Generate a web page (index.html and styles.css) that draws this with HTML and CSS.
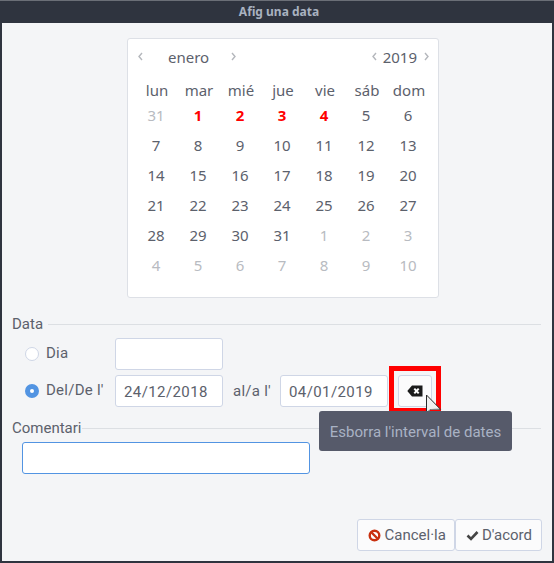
FILE: index.html
```html
<!DOCTYPE html>
<html lang="ca">
<head>
<meta charset="utf-8">
<title>Afig una data</title>
<link rel="stylesheet" href="styles.css">
</head>
<body>
<div class="window">
  <div class="titlebar">Afig una data</div>
  <div class="content">
    <div class="calendar">
      <div class="cal-head">
        <span class="chev m-prev"><svg width="7" height="9" viewBox="0 0 7 9"><path d="M5 1 2 4.500 5 8" fill="none" stroke="#b4b7bc" stroke-width="1.400"/></svg></span>
        <span class="month">enero</span>
        <span class="chev m-next"><svg width="7" height="9" viewBox="0 0 7 9"><path d="M2 1 5 4.500 2 8" fill="none" stroke="#b4b7bc" stroke-width="1.400"/></svg></span>
        <span class="head-spacer"></span>
        <span class="chev"><svg width="7" height="9" viewBox="0 0 7 9"><path d="M5 1 2 4.500 5 8" fill="none" stroke="#b4b7bc" stroke-width="1.400"/></svg></span>
        <span class="year">2019</span>
        <span class="chev"><svg width="7" height="9" viewBox="0 0 7 9"><path d="M2 1 5 4.500 2 8" fill="none" stroke="#b4b7bc" stroke-width="1.400"/></svg></span>
      </div>
      <div class="cal-grid names">
        <span>lun</span><span>mar</span><span>mié</span><span>jue</span><span>vie</span><span>sáb</span><span>dom</span>
      </div>
      <div class="cal-grid days">
        <span class="off">31</span><span class="hl">1</span><span class="hl">2</span><span class="hl">3</span><span class="hl">4</span><span>5</span><span>6</span>
        <span>7</span><span>8</span><span>9</span><span>10</span><span>11</span><span>12</span><span>13</span>
        <span>14</span><span>15</span><span>16</span><span>17</span><span>18</span><span>19</span><span>20</span>
        <span>21</span><span>22</span><span>23</span><span>24</span><span>25</span><span>26</span><span>27</span>
        <span>28</span><span>29</span><span>30</span><span>31</span><span class="off">1</span><span class="off">2</span><span class="off">3</span>
        <span class="off">4</span><span class="off">5</span><span class="off">6</span><span class="off">7</span><span class="off">8</span><span class="off">9</span><span class="off">10</span>
      </div>
    </div>

    <div class="legend legend-data"><span>Data</span></div>
    <div class="row row-dia">
      <span class="radio"></span>
      <label class="radio-label">Dia</label>
      <span class="input date"></span>
    </div>
    <div class="row row-range">
      <span class="radio on"></span>
      <label class="radio-label">Del/De l'</label>
      <span class="input date">24/12/2018</span>
      <label class="to-label">al/a l'</label>
      <span class="input date">04/01/2019</span>
      <span class="clear-wrap">
        <button class="btn clear" type="button">
          <svg width="16" height="12" viewBox="0 0 16 12"><path d="M5 .5h10.500v11H5L.3 6z" fill="#1c1c1c"/><path d="M7.300 3.600 11.700 8.400M11.700 3.600 7.300 8.400" stroke="#fff" stroke-width="2"/></svg>
        </button>
        <span class="highlight"></span>
        <svg class="cursor" width="17" height="25" viewBox="0 0 17 25"><path d="M1.500 1v18l4-3.500h1l9-.2z" fill="#f0f0f0" stroke="#2a2a2a" stroke-width="1"/><path d="M1.500 19l4-3.500 9-.2" fill="none" stroke="#888" stroke-width="1"/></svg>
      </span>
    </div>

    <div class="legend legend-comment"><span>Comentari</span></div>
    <div class="comment"></div>

    <div class="actions">
      <button class="btn action cancel" type="button">
        <svg width="13" height="13" viewBox="0 0 13 13"><circle cx="6.500" cy="6.500" r="4.800" fill="#fff" stroke="#c9300f" stroke-width="2.400"/><path d="M3 3 10 10" stroke="#c9300f" stroke-width="2.400"/></svg>
        Cancel·la
      </button>
      <button class="btn action ok" type="button">
        <svg width="13" height="11" viewBox="0 0 13 11"><path d="M1.500 5.500 5 9 11.500 2" fill="none" stroke="#444" stroke-width="2.600"/></svg>
        D'acord
      </button>
    </div>

    <div class="tooltip">Esborra l'interval de dates</div>
  </div>
</div>
</body>
</html>
```
FILE: styles.css
```css
* { box-sizing: border-box; }
html, body { margin: 0; padding: 0; }
body { width: 554px; height: 563px; overflow: hidden; background: #2f343f; }
.window { width: 554px; height: 563px; display: flex; flex-direction: column; background: #2f343f; border-top: 1px solid #6b6f77; }
.titlebar { height: 22px; flex: none; padding-left: 4px; text-align: center; font: 700 12px/22px "Noto Sans", sans-serif; color: #a9b2c0; }
.content { position: relative; flex: 1; margin: 0 2px 2px; background: #f4f5f7; padding-top: 15px; display: flex; flex-direction: column; font-family: Roboto, sans-serif; color: #5c616c; }

.calendar { align-self: flex-start; margin-left: 125px; width: 312px; height: 260px; background: #fff; border: 1px solid #dde0e6; border-radius: 3px; padding: 7px 8px 0; font-family: "Noto Sans", sans-serif; font-size: 15px; color: #5c616c; }
.cal-head { display: flex; align-items: center; height: 22px; }
.chev { display: inline-flex; width: 7px; height: 9px; margin-top: -2px; }
.m-prev { margin-left: 1px; }
.month { margin-left: 24px; width: 54px; line-height: 22px; }
.m-next { margin-left: 8px; }
.head-spacer { flex: 1; }
.year { margin: 0 6px 0 5px; line-height: 22px; }
.cal-grid { display: grid; grid-template-columns: repeat(7, 42px); justify-content: start; text-align: center; }
.names { margin-top: 10px; line-height: 24px; }
.names span { display: block; }
.days { grid-auto-rows: 30px; line-height: 30px; margin: -2px 0 0 -1px; }
.off { color: #b8bbc1; }
.hl { color: #ff0000; font-weight: 700; }

.legend { display: flex; align-items: center; margin-left: 10px; margin-right: 11px; font-size: 15px; line-height: 16px; }
.legend::after { content: ""; flex: 1; height: 1px; background: #dcdfe3; }
.legend-data { margin-top: 18px; gap: 5px; }
.legend-comment { margin-top: 13px; }

.row { display: flex; align-items: center; margin-left: 23px; font-size: 15px; }
.row-dia { margin-top: 6px; height: 32px; }
.row-range { margin-top: 5px; height: 32px; }
.radio { width: 14px; height: 14px; flex: none; border-radius: 50%; background: #fff; border: 1px solid #cfd6e6; }
.radio.on { background: #5294e2; border: 4.500px solid #5294e2; box-shadow: inset 0 0 0 2px #5294e2; position: relative; }
.radio.on::after { content: ""; display: block; width: 4px; height: 4px; border-radius: 50%; background: #fff; margin: 1px; }
.radio-label { width: 69px; margin-left: 7px; line-height: 18px; margin-top: -3px; letter-spacing: .25px; white-space: nowrap; }
.input { display: block; background: #fff; border: 1px solid #cfd6e6; border-radius: 3px; }
.date { width: 108px; height: 32px; padding-left: 8px; font-size: 15px; line-height: 32px; letter-spacing: .4px; }
.to-label { margin: 0 10px 0 10px; width: 37px; white-space: nowrap; letter-spacing: .25px; }
.clear-wrap { position: relative; display: block; margin-left: 10px; }
.btn { display: flex; align-items: center; background: #fbfbfc; border: 1px solid #cfd6e6; border-radius: 3px; padding: 0; font: 15px Roboto, sans-serif; color: #5c616c; }
.clear { width: 34px; height: 32px; justify-content: center; background: #fbfbfc; }
.highlight { position: absolute; left: -9px; top: -9px; width: 52px; height: 47px; border: 5px solid #ff0000; }
.cursor { position: absolute; left: 27px; top: 19px; }

.comment { margin: 6px 0 0 20px; width: 288px; height: 32px; background: #fff; border: 1px solid #5294e2; border-radius: 3px; }
.actions { display: flex; justify-content: flex-end; margin: 45px 10px 0 0; }
.action { height: 32px; gap: 4px; background: #fbfbfc; }
.cancel { padding: 0 8px 0 10px; }
.ok { padding: 0 9px 0 10px; gap: 3px; }

.tooltip { position: absolute; left: 317px; top: 388px; width: 193px; height: 40px; background: #565a6a; color: #a9b2c4; border-radius: 3px; font: 15px/42px Roboto, sans-serif; text-align: center; white-space: nowrap; }
```
